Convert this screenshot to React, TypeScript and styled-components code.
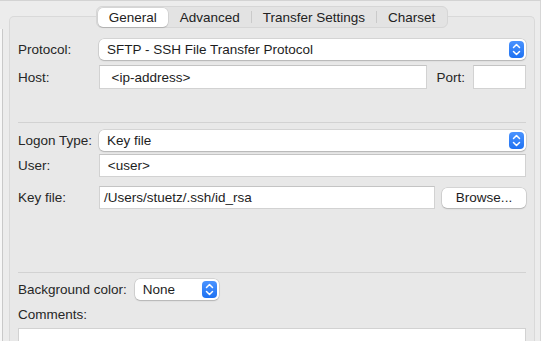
import React, { useState } from "react";
import styled, { createGlobalStyle } from "styled-components";

const GlobalStyle = createGlobalStyle`
  html, body {
    margin: 0;
    padding: 0;
    background: #ececec;
    font-family: "Liberation Sans", Arial, sans-serif;
    font-size: 13.5px;
    color: #262626;
  }
  * { box-sizing: border-box; }
`;

const Window = styled.div`
  display: flex;
  width: 541px;
  height: 341px;
  overflow: hidden;
  border-top: 1px solid #d3d3d3;
  background: #ececec;
`;

const SideEdge = styled.div`
  width: 3px;
  margin-top: 28px;
  background: #f7f7f7;
  border-right: 1px solid #c9c9c9;
`;

const Main = styled.div`
  flex: 1;
  display: flex;
  flex-direction: column;
  padding: 5px 5px 0 6px;
  border-right: 1px solid #d6d6d6;
`;

const TabBar = styled.div`
  display: flex;
  justify-content: center;
  margin-bottom: -12px;
  position: relative;
  z-index: 1;
`;

const Segments = styled.div`
  display: flex;
  align-items: center;
  height: 22px;
  padding: 1px;
  border-radius: 6px;
  background: #e3e3e3;
  border: 1px solid #d6d6d6;
`;

const Tab = styled.div<{ $active: boolean }>`
  height: 19px;
  padding: 0 11px;
  display: flex;
  align-items: center;
  border-radius: 5px;
  color: #222;
  cursor: default;
  background: ${(p) => (p.$active ? "#ffffff" : "transparent")};
  box-shadow: ${(p) =>
    p.$active ? "0 0 0 0.5px rgba(0,0,0,0.12), 0 1px 1px rgba(0,0,0,0.12)" : "none"};
`;

const TabDivider = styled.div<{ $hidden: boolean }>`
  width: 1px;
  height: 12px;
  background: ${(p) => (p.$hidden ? "transparent" : "#cacaca")};
`;

const Panel = styled.div`
  flex: 1;
  background: #e8e8e8;
  border: 1px solid #d9d9d9;
  border-bottom: none;
  border-radius: 5px 5px 0 0;
  padding: 22px 8px 0 8px;
  display: flex;
  flex-direction: column;
`;

const Row = styled.div<{ $top?: number; $h?: number }>`
  display: flex;
  align-items: center;
  margin-top: ${(p) => p.$top ?? 0}px;
  height: ${(p) => p.$h ?? 23}px;
  flex-shrink: 0;
`;

const Label = styled.label<{ $w?: number }>`
  width: ${(p) => (p.$w ? `${p.$w}px` : "auto")};
  flex-shrink: 0;
  white-space: nowrap;
  color: #262626;
`;

const InlineLabel = styled.label`
  margin: 0 8px 0 9px;
  white-space: nowrap;
`;

const Select = styled.div<{ $w?: number; $gap?: number }>`
  display: flex;
  align-items: center;
  justify-content: space-between;
  height: 21px;
  width: ${(p) => (p.$w ? `${p.$w}px` : "auto")};
  flex: ${(p) => (p.$w ? "0 0 auto" : "1")};
  margin-left: ${(p) => p.$gap ?? 0}px;
  padding: 0 2px 0 8px;
  background: #fff;
  border-radius: 5px;
  color: #1d1d1d;
  box-shadow: 0 0 0 0.5px rgba(0, 0, 0, 0.16), 0 1px 1.5px rgba(0, 0, 0, 0.16);
`;

const Stepper = styled.span`
  width: 15px;
  height: 17px;
  border-radius: 4px;
  background: linear-gradient(#4a93ff, #1f72f2);
  display: flex;
  align-items: center;
  justify-content: center;
`;

const Field = styled.div<{ $w?: number }>`
  height: 100%;
  width: ${(p) => (p.$w ? `${p.$w}px` : "auto")};
  flex: ${(p) => (p.$w ? "0 0 auto" : "1")};
  background: #fff;
  border: 1px solid #d2d2d2;
  border-top-color: #c4c4c4;
  padding: 0 4px;
  display: flex;
  align-items: center;
  color: #1d1d1d;
  white-space: pre;
`;

const Button = styled.div`
  width: 84px;
  height: 20px;
  margin-left: 7px;
  background: #fff;
  border-radius: 5px;
  display: flex;
  align-items: center;
  justify-content: center;
  color: #1d1d1d;
  box-shadow: 0 0 0 0.5px rgba(0, 0, 0, 0.16), 0 1px 1.5px rgba(0, 0, 0, 0.16);
`;

const Separator = styled.hr<{ $top: number }>`
  margin: ${(p) => p.$top}px 0 0 0;
  border: none;
  height: 1px;
  background: #d2d2d2;
  flex-shrink: 0;
`;

const Comments = styled.div`
  margin-top: 6px;
  flex: 1;
  background: #fff;
  border: 1px solid #d2d2d2;
  border-bottom: none;
`;

const Updown = () => (
  <Stepper>
    <svg width="9" height="13" viewBox="0 0 9 13" fill="none">
      <path d="M1.5 4.5 L4.5 1.5 L7.5 4.5" stroke="#fff" strokeWidth="1.5" strokeLinecap="round" strokeLinejoin="round" />
      <path d="M1.5 8.5 L4.5 11.5 L7.5 8.5" stroke="#fff" strokeWidth="1.5" strokeLinecap="round" strokeLinejoin="round" />
    </svg>
  </Stepper>
);

const tabs = ["General", "Advanced", "Transfer Settings", "Charset"];

const App = () => {
  const [active, setActive] = useState(0);

  return (
    <>
      <GlobalStyle />
      <Window>
        <SideEdge />
        <Main>
          <TabBar>
            <Segments>
              {tabs.map((t, i) => (
                <React.Fragment key={t}>
                  {i > 0 && <TabDivider $hidden={i === active || i - 1 === active} />}
                  <Tab $active={i === active} onClick={() => setActive(i)}>
                    {t}
                  </Tab>
                </React.Fragment>
              ))}
            </Segments>
          </TabBar>
          <Panel>
            <Row $h={21}>
              <Label $w={81}>Protocol:</Label>
              <Select>
                SFTP - SSH File Transfer Protocol
                <Updown />
              </Select>
            </Row>
            <Row $top={5} $h={24}>
              <Label $w={81}>Host:</Label>
              <Field>{"  <ip-address>"}</Field>
              <InlineLabel>Port:</InlineLabel>
              <Field $w={53} />
            </Row>

            <Separator $top={33} />

            <Row $top={7} $h={21}>
              <Label $w={81}>Logon Type:</Label>
              <Select>
                Key file
                <Updown />
              </Select>
            </Row>
            <Row $top={3}>
              <Label $w={81}>User:</Label>
              <Field>{" <user>"}</Field>
            </Row>
            <Row $top={9}>
              <Label $w={81}>Key file:</Label>
              <Field>/Users/stuetz/.ssh/id_rsa</Field>
              <Button>Browse...</Button>
            </Row>

            <Separator $top={63} />

            <Row $top={6} $h={21}>
              <Label>Background color:</Label>
              <Select $w={84} $gap={8}>
                None
                <Updown />
              </Select>
            </Row>
            <Row $top={6} $h={16}>
              <Label>Comments:</Label>
            </Row>
            <Comments />
          </Panel>
        </Main>
      </Window>
    </>
  );
};

export default App;
